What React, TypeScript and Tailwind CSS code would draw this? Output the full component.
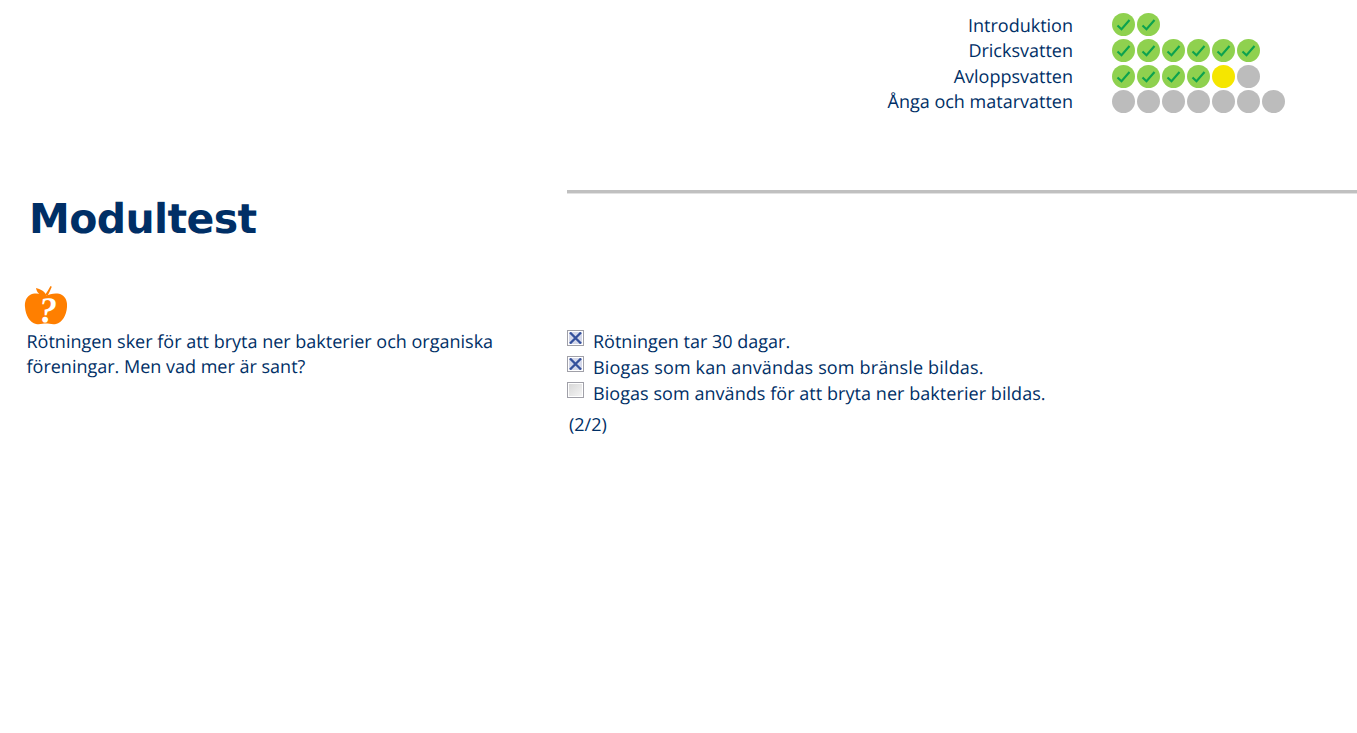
const progress = [
  { label: "Introduktion", dots: ["done", "done"] },
  { label: "Dricksvatten", dots: ["done", "done", "done", "done", "done", "done"] },
  { label: "Avloppsvatten", dots: ["done", "done", "done", "done", "current", "todo"] },
  { label: "Ånga och matarvatten", dots: ["todo", "todo", "todo", "todo", "todo", "todo", "todo"] },
];

const answers = [
  { text: "Rötningen tar 30 dagar.", checked: true, spacing: "" },
  { text: "Biogas som kan användas som bränsle bildas.", checked: true, spacing: "tracking-[0.16px]" },
  { text: "Biogas som används för att bryta ner bakterier bildas.", checked: false, spacing: "tracking-[0.055px]" },
];

function Dot({ state }: { state: string }) {
  if (state === "done") {
    return (
      <div className="w-[23px] h-[23px] rounded-full bg-[#8fd14f] flex items-center justify-center">
        <svg width="15" height="13" viewBox="0 0 15 13" fill="none">
          <path d="M1.5 7.5 L5.5 11.2 L13.5 2" stroke="#0ca24f" strokeWidth="2.1" />
        </svg>
      </div>
    );
  }
  return <div className={state === "current" ? "w-[23px] h-[23px] rounded-full bg-[#f5e600]" : "w-[23px] h-[23px] rounded-full bg-[#bcbcbc]"} />;
}

function Checkbox({ checked }: { checked: boolean }) {
  return (
    <div className="w-[17px] h-[16px] shrink-0 border border-[#a0a0a8] bg-white p-[1px]">
      {checked ? (
        <svg width="13" height="12" viewBox="0 0 13 12" className="block">
          <rect width="13" height="12" fill="#d4d8ea" />
          <path d="M1 0.5 L12 11.5 M12 0.5 L1 11.5" stroke="#34509c" strokeWidth="2.3" />
        </svg>
      ) : (
        <div className="w-[13px] h-[12px] bg-gradient-to-br from-[#d8d8d8] to-[#f4f4f4]" />
      )}
    </div>
  );
}

function Apple() {
  return (
    <svg width="44" height="44" viewBox="0 0 44 44" className="block">
      <path d="M21 9 C23 6 25 3 26.5 0 L27.8 0.8 C26.5 4 25 7 23.5 10 Z" fill="#ff7f00" />
      <path d="M12 2 C16 3 21 5 22.5 10 C17 10.5 13 7.5 12 2 Z" fill="#ff7f00" />
      <path d="M22 10 C26 7.5 34 6.5 38 9 C42 11.5 43.5 16 43 21 C42.5 29 38 37 32 38 C28 38.7 25 37.5 22 37.5 C19 37.5 16 38.7 12 38 C6 37 1.5 29 1 21 C0.5 16 2 11.5 6 9 C10 6.5 18 7.5 22 10 Z" fill="#ff7f00" />
      <text x="24" y="36" textAnchor="middle" fill="#ffffff" fontSize="36" fontWeight="700" fontStyle="italic" fontFamily="'Liberation Serif', serif">?</text>
    </svg>
  );
}

export default function App() {
  return (
    <div className="h-[733px] w-full bg-white text-[#002f66] font-['Open_Sans',sans-serif] text-[18px] leading-[25.67px] overflow-hidden [text-rendering:geometricPrecision]">
      {/* Progress per module */}
      <div className="flex flex-col pt-[12px] h-[190px]">
        {progress.map((row) => (
          <div key={row.label} className="flex items-center h-[25.67px]">
            <div className="w-[1073px] text-right pt-[3px]">{row.label}</div>
            <div className="flex gap-[2px] ml-[39px]">
              {row.dots.map((d, i) => (
                <Dot key={i} state={d} />
              ))}
            </div>
          </div>
        ))}
      </div>

      <div className="flex">
        <div className="w-[567px] shrink-0">
          <h1 className="pl-[29px] pt-[4px] font-['DejaVu_Sans',sans-serif] font-bold text-[41px] tracking-[-0.6px] leading-[50px]">Modultest</h1>
          <div className="pl-[24px] pt-[42px]">
            <Apple />
          </div>
          <p className="pl-[26.5px] pr-[60px] leading-[25px]">
            Rötningen sker för att bryta ner bakterier och organiska föreningar. Men vad mer är sant?
          </p>
        </div>
        <div className="flex-1">
          <div className="h-[4px] bg-[#c0c0c0] border-b border-[#e2e2e2]" />
          <div className="pt-[136px]">
            {answers.map((a) => (
              <div key={a.text} className="flex gap-[9px] h-[26px]">
                <Checkbox checked={a.checked} />
                <span className={a.spacing}>{a.text}</span>
              </div>
            ))}
            <div className="pl-[2px] mt-[5px]">(2/2)</div>
          </div>
        </div>
      </div>
    </div>
  );
}
